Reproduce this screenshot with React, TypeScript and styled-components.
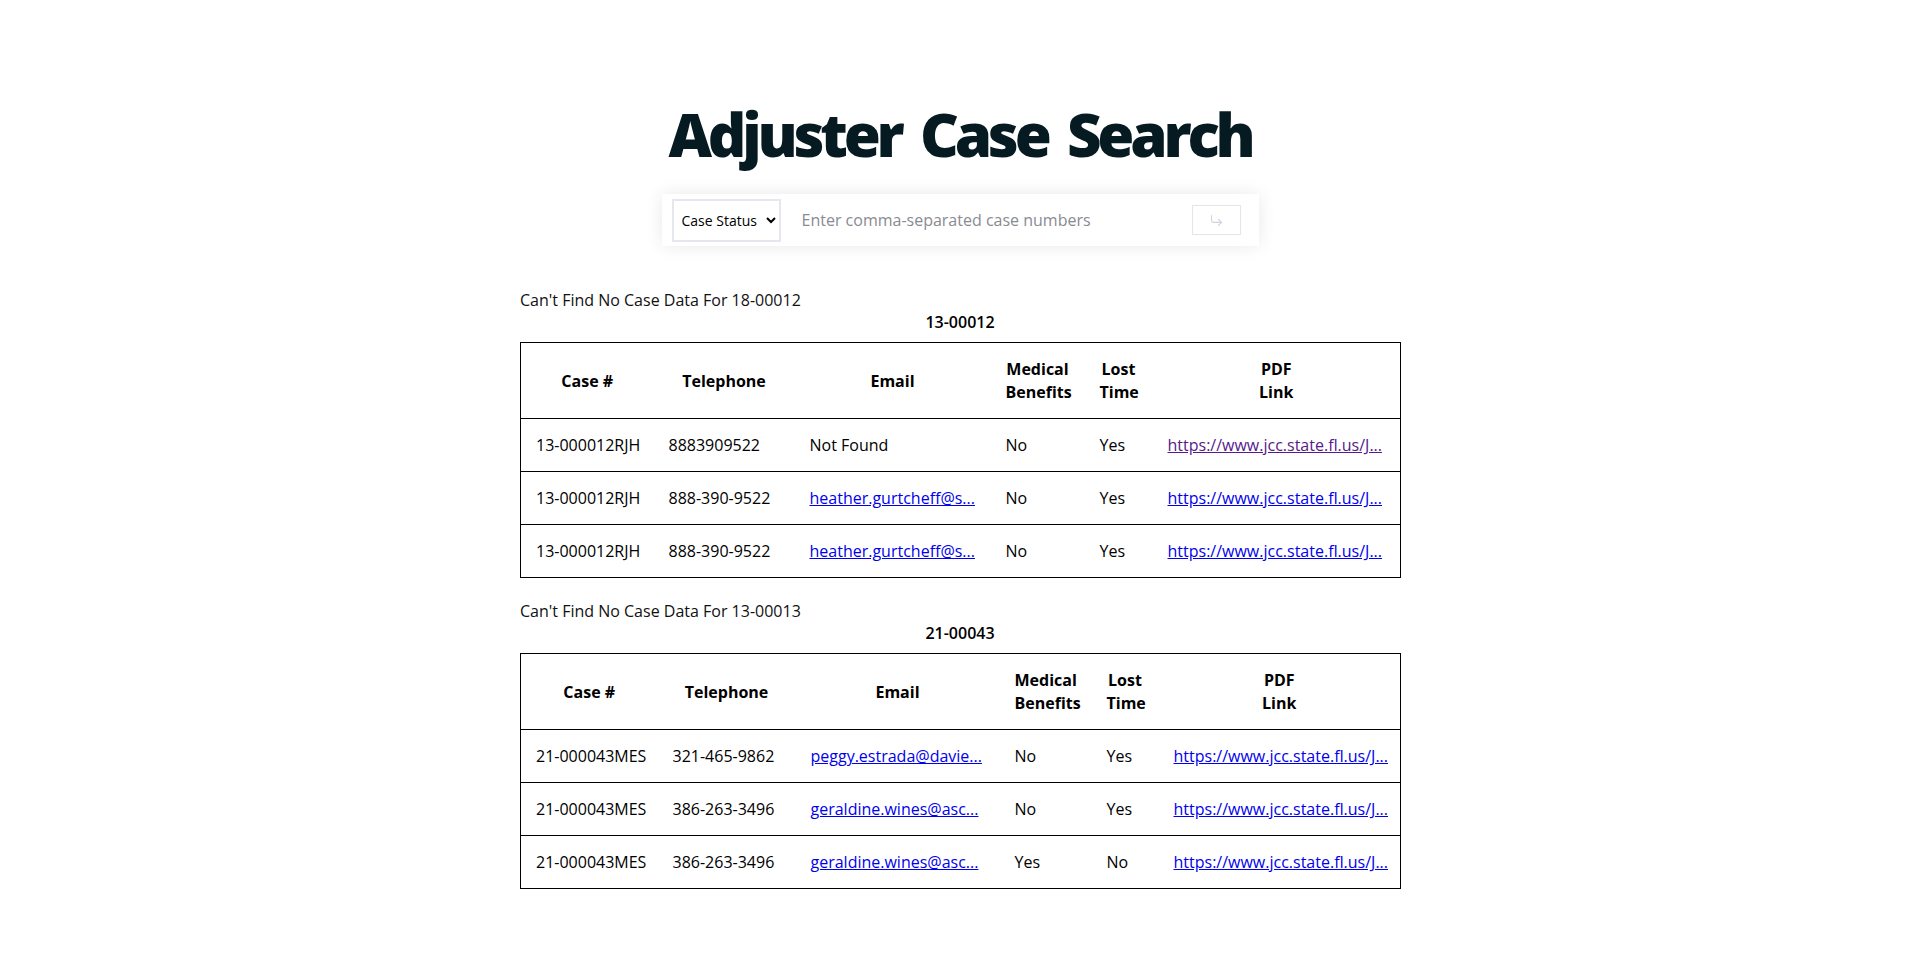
import styled, { createGlobalStyle } from "styled-components";
import { CornerDownRight } from "lucide-react";

const GlobalStyle = createGlobalStyle`
  body {
    margin: 0;
    background: #fff;
    color: #000;
    font-family: "Open Sans", "Liberation Sans", sans-serif;
  }
`;

type CaseRow = {
  caseNo: string;
  phone: string;
  email: string | null;
  medical: string;
  lostTime: string;
  pdf: string;
  visited?: boolean;
};

type CaseGroup = {
  missing: string;
  caseNo: string;
  cols: number[];
  rows: CaseRow[];
};

const PDF_URL = "https://www.jcc.state.fl.us/JCC/searchJCC/caseDocket.asp";

const GROUPS: CaseGroup[] = [
  {
    missing: "18-00012",
    caseNo: "13-00012",
    cols: [133, 141, 196, 94, 68, 248],
    rows: [
      { caseNo: "13-000012RJH", phone: "8883909522", email: null, medical: "No", lostTime: "Yes", pdf: PDF_URL, visited: true },
      { caseNo: "13-000012RJH", phone: "888-390-9522", email: "heather.gurtcheff@sedgwick.com", medical: "No", lostTime: "Yes", pdf: PDF_URL },
      { caseNo: "13-000012RJH", phone: "888-390-9522", email: "heather.gurtcheff@sedgwick.com", medical: "No", lostTime: "Yes", pdf: PDF_URL },
    ],
  },
  {
    missing: "13-00013",
    caseNo: "21-00043",
    cols: [137, 138, 204, 92, 67, 242],
    rows: [
      { caseNo: "21-000043MES", phone: "321-465-9862", email: "peggy.estrada@daviesgroup.com", medical: "No", lostTime: "Yes", pdf: PDF_URL },
      { caseNo: "21-000043MES", phone: "386-263-3496", email: "geraldine.wines@ascendant.com", medical: "No", lostTime: "Yes", pdf: PDF_URL },
      { caseNo: "21-000043MES", phone: "386-263-3496", email: "geraldine.wines@ascendant.com", medical: "Yes", lostTime: "No", pdf: PDF_URL },
    ],
  },
];

const truncate = (text: string, max: number) =>
  text.length > max ? `${text.slice(0, max)}...` : text;

const Page = styled.main`
  display: flex;
  flex-direction: column;
  align-items: center;
  padding: 98px 0 80px 8px;
`;

const Title = styled.h1`
  margin: 0;

  font-size: 60px;
  line-height: 72px;
  font-weight: 800;
  letter-spacing: -4.2px;
  word-spacing: 8px;
  color: #061a21;
`;

const SearchBar = styled.form`
  display: flex;
  align-items: center;
  box-sizing: border-box;
  width: 597px;
  height: 52px;
  margin-top: 24px;
  padding: 0 18px 0 10px;

  background: #fff;
  box-shadow: 0 0 18px rgba(0, 0, 0, 0.09);
`;

const StatusSelect = styled.select`
  box-sizing: border-box;
  width: 109px;
  height: 43px;
  padding: 0 2px 0 4px;

  font-family: "Open Sans", "Liberation Sans", sans-serif;
  font-size: 14px;
  color: #000;
  background: #fff;
  border: 2px solid #e6e6ee;
  border-radius: 0;
`;

const CaseInput = styled.input`
  flex: 1;
  min-width: 0;
  padding: 0 0 0 21px;

  font-family: "Open Sans", "Liberation Sans", sans-serif;
  font-size: 16px;
  color: #222;
  border: none;
  outline: none;
  background: transparent;

  &::placeholder {
    color: #8a8a93;
  }
`;

const SubmitButton = styled.button`
  display: flex;
  align-items: center;
  justify-content: center;
  width: 49px;
  height: 30px;
  padding: 0;

  color: #cfd4de;
  background: #fff;
  border: 1px solid #e3e5ec;
  cursor: pointer;
`;

const Results = styled.div`
  width: 880px;
  margin-top: 43px;
`;

const Section = styled.section`
  margin-bottom: 22px;
`;

const Message = styled.p`
  margin: 0;
  font-size: 16px;
  line-height: 22px;
  color: #111;
`;

const CaseTitle = styled.h3`
  margin: 0 0 9px;
  font-size: 16px;
  line-height: 22px;
  font-weight: 600;
  text-align: center;
`;

const Table = styled.table`
  width: 100%;
  table-layout: fixed;
  border-collapse: collapse;
  border: 1px solid #000;
`;

const Col = styled.col<{ $width: number }>`
  width: ${({ $width }) => $width}px;
`;

const HeadCell = styled.th`
  padding: 15px 15px 14px;
  font-size: 16px;
  line-height: 23px;
  font-weight: 700;
  text-align: center;
  border-bottom: 1px solid #000;
`;

const Cell = styled.td`
  padding: 15px 15px 14px;
  font-size: 16px;
  line-height: 23px;
  white-space: nowrap;
  overflow: hidden;
  border-bottom: 1px solid #000;
`;

const Link = styled.a<{ $visited?: boolean }>`
  color: ${({ $visited }) => ($visited ? "#551a8b" : "#0000ee")};
  text-decoration: underline;
`;

const CaseTable = ({ group }: { group: CaseGroup }) => (
  <Section>
    <Message>Can't Find No Case Data For {group.missing}</Message>
    <CaseTitle>{group.caseNo}</CaseTitle>
    <Table>
      <colgroup>
        {group.cols.map((w, i) => (
          <Col key={i} $width={w} />
        ))}
      </colgroup>
      <thead>
        <tr>
          <HeadCell>Case #</HeadCell>
          <HeadCell>Telephone</HeadCell>
          <HeadCell>Email</HeadCell>
          <HeadCell>
            Medical
            <br />
            Benefits
          </HeadCell>
          <HeadCell>
            Lost
            <br />
            Time
          </HeadCell>
          <HeadCell>
            PDF
            <br />
            Link
          </HeadCell>
        </tr>
      </thead>
      <tbody>
        {group.rows.map((row, i) => (
          <tr key={i}>
            <Cell>{row.caseNo}</Cell>
            <Cell>{row.phone}</Cell>
            <Cell>
              {row.email ? (
                <Link href={`mailto:${row.email}`} title={row.email}>
                  {truncate(row.email, 19)}
                </Link>
              ) : (
                "Not Found"
              )}
            </Cell>
            <Cell>{row.medical}</Cell>
            <Cell>{row.lostTime}</Cell>
            <Cell>
              <Link href={row.pdf} title={row.pdf} $visited={row.visited}>
                {truncate(row.pdf, 29)}
              </Link>
            </Cell>
          </tr>
        ))}
      </tbody>
    </Table>
  </Section>
);

export default function App() {
  return (
    <>
      <GlobalStyle />
      <Page>
        <Title>Adjuster Case Search</Title>
        <SearchBar onSubmit={(e) => e.preventDefault()}>
          <StatusSelect defaultValue="status">
            <option value="status">Case Status</option>
            <option value="docket">Case Docket</option>
          </StatusSelect>
          <CaseInput placeholder="Enter comma-separated case numbers" />
          <SubmitButton type="submit" aria-label="Search">
            <CornerDownRight size={15} strokeWidth={1.75} />
          </SubmitButton>
        </SearchBar>
        <Results>
          {GROUPS.map((group) => (
            <CaseTable key={group.caseNo} group={group} />
          ))}
        </Results>
      </Page>
    </>
  );
}
